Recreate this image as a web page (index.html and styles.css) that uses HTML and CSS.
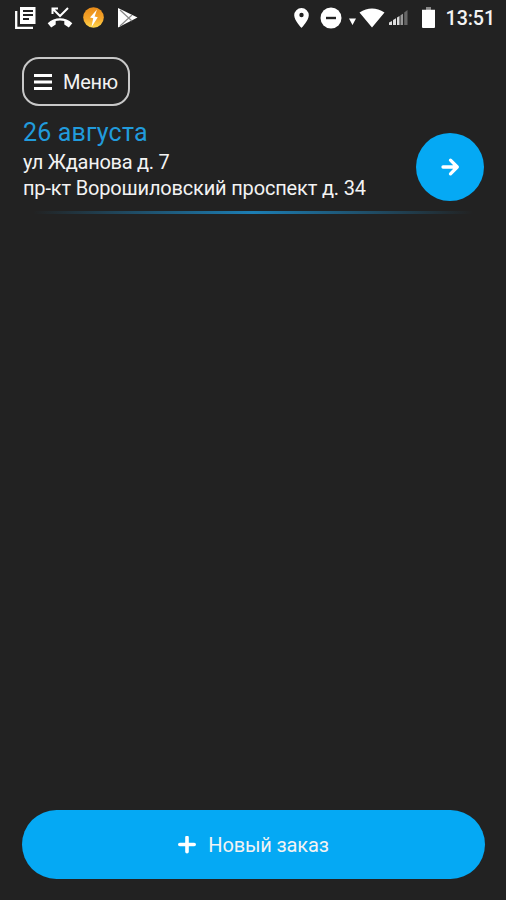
FILE: index.html
```html
<!DOCTYPE html>
<html lang="ru">
<head>
<meta charset="utf-8">
<meta name="viewport" content="width=device-width, initial-scale=1">
<title>Заказы</title>
<link rel="stylesheet" href="styles.css">
</head>
<body>
<div class="app">
  <header class="status">
    <div class="status-left">
      <svg width="24" height="24" viewBox="0 0 24 24"><path fill="#fff" d="M6 1h15.500v17H6z"/><path fill="none" stroke="#fff" stroke-width="2.300" d="M2.200 5v16.800H19"/><path stroke="#222" stroke-width="1.800" d="M9 5h10M9 9h10M9 13h6"/></svg>
      <svg width="26" height="24" viewBox="0 0 26 24"><path fill="none" stroke="#fff" stroke-width="2" d="M5.500 8V2.500H11M6 3l7 7 8-8"/><path fill="#fff" d="M.7 17.200C7.500 10.700 18.500 10.700 25.300 17.200L21.800 21.400 17.300 18.500V15.100Q13 13.700 8.700 15.100V18.500L4.200 21.400z"/></svg>
      <svg width="22" height="24" viewBox="0 0 22 24"><defs><linearGradient id="coin" x2="0" y2="1"><stop stop-color="#e98b18"/><stop offset=".55" stop-color="#f5a52a"/><stop offset="1" stop-color="#ffd84d"/></linearGradient></defs><circle cx="10.500" cy="11.500" r="10.300" fill="url(#coin)"/><path fill="#fff" d="M14 3.500 7 11.500l3.200.7L8.500 21l6.300-9.800-3.200-.7z"/></svg>
      <svg width="22" height="24" viewBox="0 0 22 24"><path fill="#fff" d="M1 2 20.500 11.500 1 21.500z"/><path fill="none" stroke="#888" stroke-width="1.200" d="m3 4 12 11M3 20 15 9"/></svg>
    </div>
    <div class="status-right">
      <svg class="pin" width="15" height="20" viewBox="0 0 15 20"><path fill="#fff" fill-rule="evenodd" d="M7.500 0A7.300 7.300 0 0 0 .2 7.300C.2 12.500 7.500 20 7.500 20S14.800 12.500 14.800 7.300A7.300 7.300 0 0 0 7.500 0m0 4.800a2.200 2.200 0 1 1 0 4.400 2.200 2.200 0 0 1 0-4.400"/></svg>
      <svg class="dnd" width="22" height="22" viewBox="0 0 22 22"><circle cx="11" cy="11" r="10.500" fill="#fff"/><path stroke="#222" stroke-width="2.400" d="M6 11h10"/></svg>
      <svg class="wifi" width="36" height="20" viewBox="0 0 36 20"><path fill="#fff" d="M0 10.500h7L3.500 17zM10.500 4.500Q23 -3.500 35.500 4.500L23 19.500z"/></svg>
      <svg class="signal" width="19" height="17" viewBox="0 0 19 17"><path fill="#ddd" d="M0 13.500 3 12v4H0zM4 11l3-1.700V16H4zM8 8.500l2.500-1.500v9H8z"/><path fill="#999" d="M11.500 6.300 14 4.800V16h-2.500z"/><path fill="#666" d="M15.200 3.500 18.500 1v15h-3.300z"/></svg>
      <svg class="battery" width="13" height="21" viewBox="0 0 13 21"><path fill="#888" d="M4 0h5v3H4z"/><path fill="#fff" d="M0 2.800h13V20a1 1 0 0 1-1 1H1a1 1 0 0 1-1-1z"/></svg>
      <span class="clock">13:51</span>
    </div>
  </header>

  <main class="content">
    <button class="menu">
      <svg width="18" height="18" viewBox="0 0 18 18"><path stroke="#fff" stroke-width="3" d="M0 2.500h18M0 9h18M0 15.500h18"/></svg>
      <span>Меню</span>
    </button>
    <section class="order">
      <div class="details">
        <h1 class="date">26 августа</h1>
        <p class="address address-from">ул Жданова д. 7</p>
        <p class="address">пр-кт Ворошиловский проспект д. 34</p>
      </div>
      <button class="go" aria-label="Открыть">
        <svg width="20" height="20" viewBox="0 0 20 20"><path fill="none" stroke="#fff" stroke-width="3.300" stroke-linecap="round" stroke-linejoin="round" d="M3 10H17M10.500 3.200 17.300 10 10.500 16.800"/></svg>
      </button>
    </section>
    <div class="divider"></div>
  </main>

  <button class="new-order">
    <svg width="18" height="18" viewBox="0 0 18 18"><path stroke="#fff" stroke-width="3.600" stroke-linecap="round" d="M1.800 8.500h14.400M9 1.500v14.200"/></svg>
    <span>Новый заказ</span>
  </button>
</div>
</body>
</html>
```

FILE: styles.css
```css
* { box-sizing: border-box; }
body { margin: 0; background: #222; color: #f3f3f3; font-family: Roboto, sans-serif; }
button { font: inherit; color: inherit; padding: 0; border: 0; }
svg { display: block; flex: none; }
.app { height: 900px; display: flex; flex-direction: column; background: #222; }
.status { height: 36px; flex: none; display: flex; justify-content: space-between; padding: 0 11px 0 14px; }
.status-left { display: flex; align-items: center; gap: 10px; height: 35px; }
.status-left svg:nth-child(2) { margin-left: -1px; }
.status-left svg:nth-child(4) { margin-left: 2px; }
.status-right { display: flex; align-items: center; height: 35px; }
.dnd { margin-left: 11px; }
.wifi { margin-left: 7px; }
.signal { margin-left: 4px; }
.battery { margin-left: 14px; }
.clock { margin-left: 11px; font-size: 19.700px; font-weight: 500; line-height: 36px; margin-top: 2px; letter-spacing: -0.100px; }
.content { flex: 1; padding: 21px 22px 0; }
.menu { display: flex; align-items: center; width: 108px; height: 49px; padding-left: 10px; gap: 11px; border: 2px solid #c8c8c8; border-radius: 17px; background: transparent; font-size: 20px; line-height: 24px; letter-spacing: -0.300px; }
.order { display: flex; justify-content: space-between; padding: 11px 0 0 1px; height: 105px; }
.date { margin: 0; color: #219bdc; font-size: 25px; font-weight: 400; line-height: 31px; letter-spacing: 0.180px; }
.address { margin: 0; font-size: 20px; line-height: 27px; white-space: nowrap; letter-spacing: -0.170px; }
.address-from { padding-top: 1px; line-height: 26px; letter-spacing: -0.260px; }
.go { display: flex; align-items: center; justify-content: center; width: 68px; height: 68px; margin-top: 16px; border-radius: 50%; background: #05a9f4; }
.divider { height: 3px; margin: 0 11px; background: linear-gradient(90deg, transparent, #1c7eb4 50%, transparent); }
.new-order { display: flex; flex: none; align-items: center; justify-content: center; gap: 12px; height: 69px; margin: 0 21px 21px 22px; border-radius: 35px; background: #05a9f4; font-size: 20px; line-height: 24px; letter-spacing: -0.150px; }
```
